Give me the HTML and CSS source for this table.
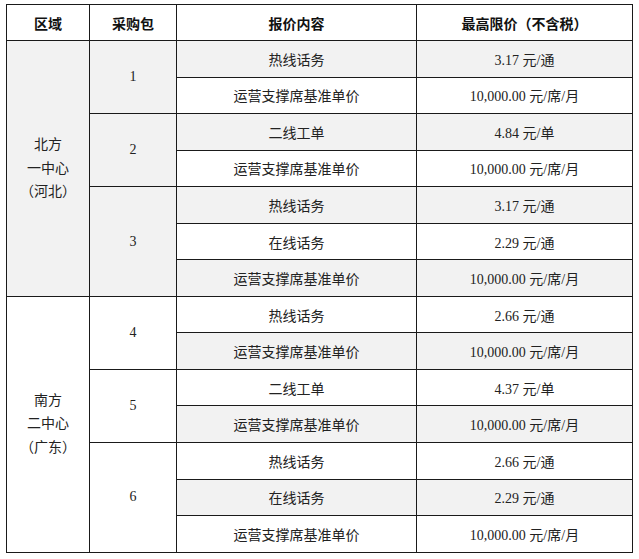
FILE: index.html
```html
<!DOCTYPE html>
<html lang="zh">
<head>
<meta charset="utf-8">
<link rel="stylesheet" href="styles.css">
</head>
<body>
<table class="price">
  <colgroup>
    <col class="c1"><col class="c2"><col class="c3"><col class="c4">
  </colgroup>
  <thead>
    <tr><th>区域</th><th>采购包</th><th>报价内容</th><th>最高限价（不含税）</th></tr>
  </thead>
  <tbody>
    <tr><td rowspan="7" class="region">北方<br>一中心<br>（河北）</td><td rowspan="2">1</td><td>热线话务</td><td>3.17 元/通</td></tr>
    <tr><td>运营支撑席基准单价</td><td>10,000.00 元/席/月</td></tr>
    <tr><td rowspan="2">2</td><td>二线工单</td><td>4.84 元/单</td></tr>
    <tr><td>运营支撑席基准单价</td><td>10,000.00 元/席/月</td></tr>
    <tr><td rowspan="3">3</td><td>热线话务</td><td>3.17 元/通</td></tr>
    <tr><td>在线话务</td><td>2.29 元/通</td></tr>
    <tr><td>运营支撑席基准单价</td><td>10,000.00 元/席/月</td></tr>
    <tr><td rowspan="7" class="region">南方<br>二中心<br>（广东）</td><td rowspan="2">4</td><td>热线话务</td><td>2.66 元/通</td></tr>
    <tr><td>运营支撑席基准单价</td><td>10,000.00 元/席/月</td></tr>
    <tr><td rowspan="2">5</td><td>二线工单</td><td>4.37 元/单</td></tr>
    <tr><td>运营支撑席基准单价</td><td>10,000.00 元/席/月</td></tr>
    <tr><td rowspan="3">6</td><td>热线话务</td><td>2.66 元/通</td></tr>
    <tr><td>在线话务</td><td>2.29 元/通</td></tr>
    <tr><td>运营支撑席基准单价</td><td>10,000.00 元/席/月</td></tr>
  </tbody>
</table>
</body>
</html>
```

FILE: styles.css
```css
html, body {
  margin: 0;
  background: #ffffff;
}
body {
  padding: 4px 6px;
  font-family: "Liberation Serif", "Noto Sans CJK SC", serif;
  font-size: 14px;
  color: #222;
}
.price {
  border-collapse: collapse;
  width: 626px;
  table-layout: fixed;
}
.c1 { width: 83px; }
.c2 { width: 87px; }
.c3 { width: 240px; }
.c4 { width: 216px; }
.price th, .price td {
  border: 1px solid #1a1a1a;
  text-align: center;
  vertical-align: middle;
  padding: 0;
}
.price th {
  height: 35px;
  font-weight: bold;
  color: #111;
}
.price tbody tr {
  height: 36.55px;
}
.price tbody tr:nth-child(odd) {
  background: #f2f2f2;
}
.region {
  line-height: 23.5px;
}
```
